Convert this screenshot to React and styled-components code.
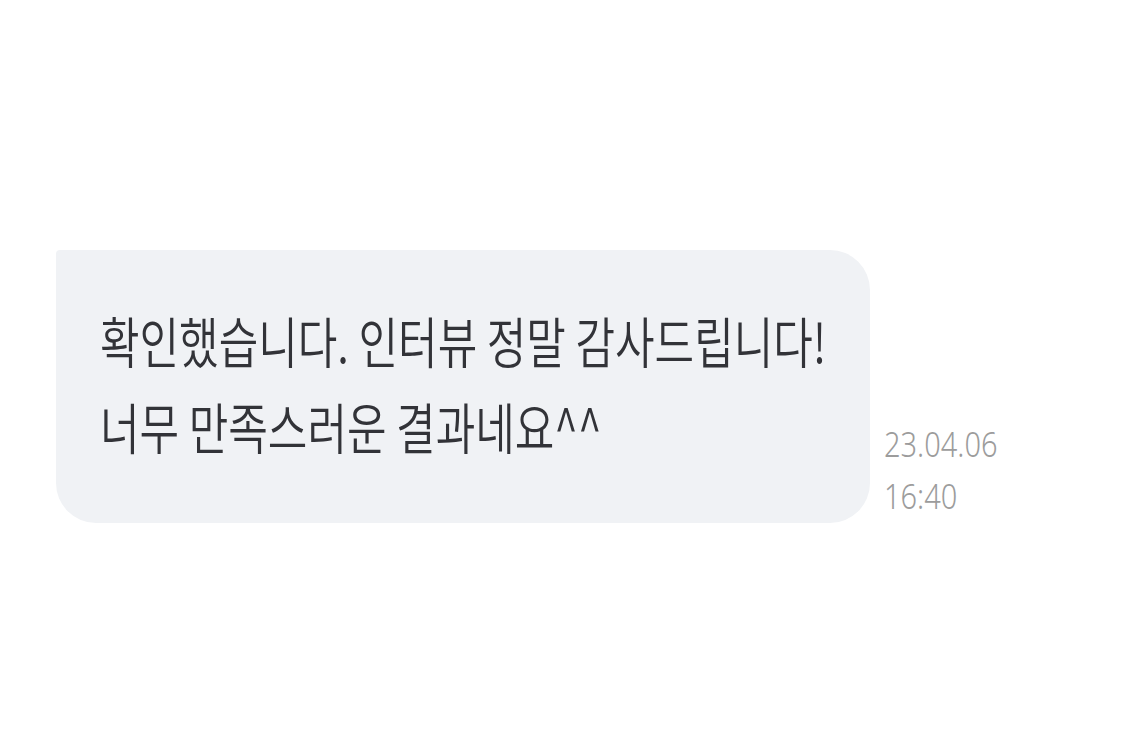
import React from 'react';
import styled, { createGlobalStyle } from 'styled-components';

const Global = createGlobalStyle`
  html, body {
    margin: 0;
    padding: 0;
    background: #ffffff;
  }
`;

const Page = styled.div`
  width: 1134px;
  height: 756px;
  box-sizing: border-box;
  padding: 250px 0 0 56px;
  background: #fff;
`;

const Row = styled.div`
  display: flex;
  align-items: flex-end;
  gap: 14px;
`;

const Bubble = styled.div`
  width: 814px;
  height: 273px;
  box-sizing: border-box;
  padding: 46px 0 0 44px;
  background: #f0f2f5;
  border-radius: 4px 40px 40px 40px;
`;

// the reference type is drawn taller than it is wide
const Line = styled.div`
  font-family: "Noto Sans CJK KR", "Noto Sans", sans-serif;
  font-size: 43px;
  font-weight: 350;
  line-height: 86px;
  color: #323338;
  white-space: nowrap;
  transform: scaleY(1.27);
  transform-origin: left center;
`;

const Meta = styled.div`
  display: flex;
  flex-direction: column;
  padding-bottom: 1px;
`;

const Stamp = styled.span`
  font-family: "Noto Sans", "Liberation Sans", sans-serif;
  font-weight: 300;
  font-size: 29px;
  line-height: 52px;
  color: #9c9c9c;
  transform: scaleY(1.18);
  transform-origin: left center;
`;

export default function App() {
  return (
    <Page>
      <Global />
      <Row>
        <Bubble>
          <Line>확인했습니다. 인터뷰 정말 감사드립니다!</Line>
          <Line>너무 만족스러운 결과네요^^</Line>
        </Bubble>
        <Meta>
          <Stamp>23.04.06</Stamp>
          <Stamp>16:40</Stamp>
        </Meta>
      </Row>
    </Page>
  );
}
